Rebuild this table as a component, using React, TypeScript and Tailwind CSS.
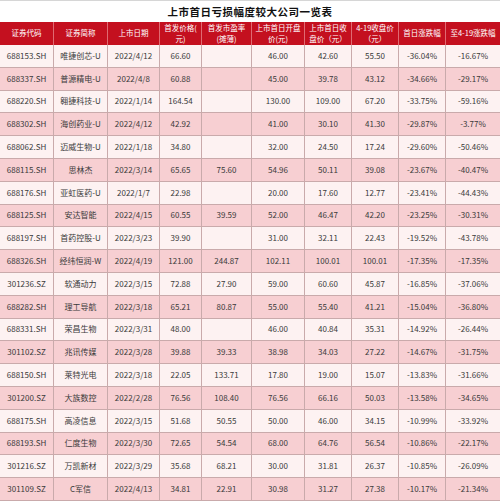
import React from "react";

const cols = "grid-cols-[54px_54px_52px_42px_50px_53px_47px_47px_47px_54px]";

const headers: React.ReactNode[] = [
  "证券代码",
  "证券简称",
  "上市日期",
  <>首发价格(<br />元)</>,
  <>首发市盈率<br />(摊薄)</>,
  <>上市首日开盘<br />价(元)</>,
  <>上市首日收<br />盘价（元）</>,
  <>4-19收盘价<br />（元）</>,
  "首日涨跌幅",
  "至4-19涨跌幅",
];

const rows: string[][] = [
  ["688153.SH", "唯捷创芯-U", "2022/4/12", "66.60", "", "46.00", "42.60", "55.50", "-36.04%", "-16.67%"],
  ["688337.SH", "普源精电-U", "2022/4/8", "60.88", "", "45.00", "39.78", "43.12", "-34.66%", "-29.17%"],
  ["688220.SH", "翱捷科技-U", "2022/1/14", "164.54", "", "130.00", "109.00", "67.20", "-33.75%", "-59.16%"],
  ["688302.SH", "海创药业-U", "2022/4/12", "42.92", "", "41.00", "30.10", "41.30", "-29.87%", "-3.77%"],
  ["688062.SH", "迈威生物-U", "2022/1/18", "34.80", "", "32.00", "24.50", "17.24", "-29.60%", "-50.46%"],
  ["688115.SH", "思林杰", "2022/3/14", "65.65", "75.60", "54.96", "50.11", "39.08", "-23.67%", "-40.47%"],
  ["688176.SH", "亚虹医药-U", "2022/1/7", "22.98", "", "20.00", "17.60", "12.77", "-23.41%", "-44.43%"],
  ["688125.SH", "安达智能", "2022/4/15", "60.55", "39.59", "52.00", "46.47", "42.20", "-23.25%", "-30.31%"],
  ["688197.SH", "首药控股-U", "2022/3/23", "39.90", "", "31.00", "32.11", "22.43", "-19.52%", "-43.78%"],
  ["688326.SH", "经纬恒润-W", "2022/4/19", "121.00", "244.87", "102.11", "100.01", "100.01", "-17.35%", "-17.35%"],
  ["301236.SZ", "软通动力", "2022/3/15", "72.88", "27.90", "59.00", "60.60", "45.87", "-16.85%", "-37.06%"],
  ["688282.SH", "理工导航", "2022/3/18", "65.21", "80.87", "55.00", "55.40", "41.21", "-15.04%", "-36.80%"],
  ["688331.SH", "荣昌生物", "2022/3/31", "48.00", "", "46.00", "40.84", "35.31", "-14.92%", "-26.44%"],
  ["301102.SZ", "兆讯传媒", "2022/3/28", "39.88", "39.33", "38.98", "34.03", "27.22", "-14.67%", "-31.75%"],
  ["688150.SH", "莱特光电", "2022/3/18", "22.05", "133.71", "17.80", "19.00", "15.07", "-13.83%", "-31.66%"],
  ["301200.SZ", "大族数控", "2022/2/28", "76.56", "108.40", "76.56", "66.16", "50.03", "-13.58%", "-34.65%"],
  ["688175.SH", "高凌信息", "2022/3/15", "51.68", "50.55", "50.00", "46.00", "34.15", "-10.99%", "-33.92%"],
  ["688193.SH", "仁度生物", "2022/3/30", "72.65", "54.54", "68.00", "64.76", "56.54", "-10.86%", "-22.17%"],
  ["301216.SZ", "万凯新材", "2022/3/29", "35.68", "68.21", "30.00", "31.81", "26.37", "-10.85%", "-26.09%"],
  ["301109.SZ", "C军信", "2022/4/13", "34.81", "22.91", "30.98", "31.27", "27.38", "-10.17%", "-21.34%"],
];

export default function App() {
  return (
    <div className="w-[500px] h-[502px] overflow-hidden bg-white font-['Noto_Sans_CJK_SC',sans-serif]">
      <div className="h-[22px] border-t border-[#d6d6d6] flex items-center justify-center text-[10.5px] font-bold text-[#111] tracking-[0.5px]">
        上市首日亏损幅度较大公司一览表
      </div>
      <div className={`grid ${cols} h-[23px] bg-[#c4101f] text-white text-[7.5px] leading-[10.5px]`}>
        {headers.map((h, i) => (
          <div
            key={i}
            className="flex items-center justify-center text-center border-r border-[#e06a72] last:border-r-0 overflow-hidden"
          >
            <span className="whitespace-nowrap">{h}</span>
          </div>
        ))}
      </div>
      {rows.map((r, ri) => (
        <div
          key={ri}
          className={`grid ${cols} h-[22.8px] text-[8px] text-[#3a3a3a] border-b border-[#c9aaab] ${
            ri % 2 === 0 ? "bg-[#fdf2f2]" : "bg-[#f7cfd2]"
          }`}
        >
          {r.map((c, ci) => (
            <div
              key={ci}
              className="flex items-center justify-center border-r border-[#c9aaab] last:border-r-0 whitespace-nowrap"
            >
              {c}
            </div>
          ))}
        </div>
      ))}
    </div>
  );
}
